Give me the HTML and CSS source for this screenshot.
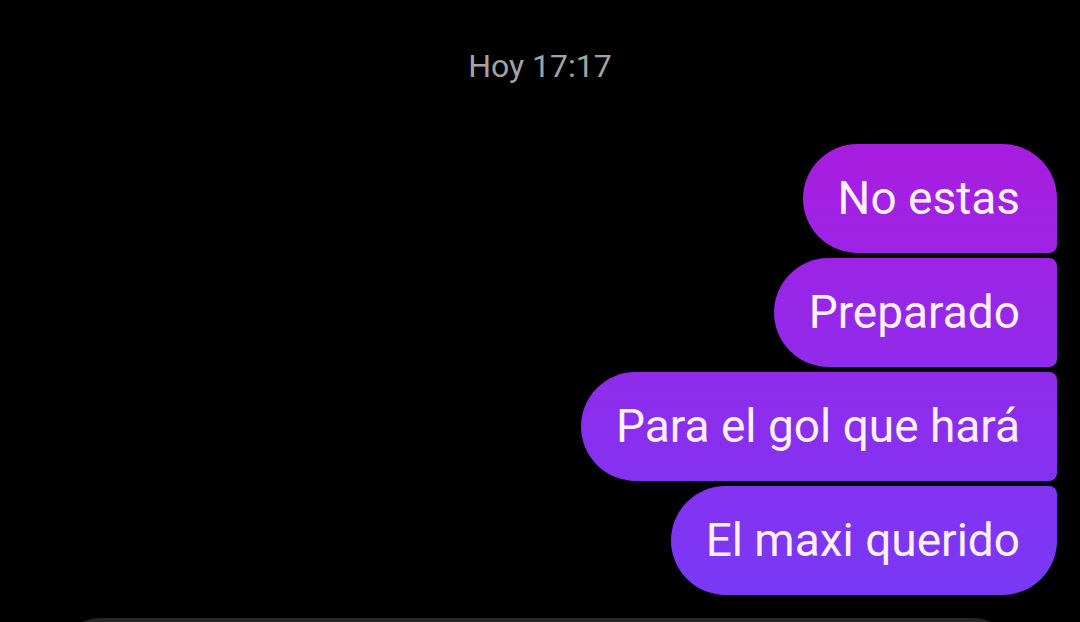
FILE: index.html
```html
<!DOCTYPE html>
<html lang="es">
<head>
  <meta charset="UTF-8" />
  <meta name="viewport" content="width=device-width, initial-scale=1.0" />
  <title>Mensajes</title>
  <link rel="stylesheet" href="styles.css">
</head>
<body>

  <!-- ───── date strip ───── -->
  <div class="stamp">Hoy 17:17</div>

  <!-- ───── sent messages ───── -->
  <div class="thread">
    <div class="bubble first">No estas</div>
    <div class="bubble">Preparado</div>
    <div class="bubble">Para el gol que hará</div>
    <div class="bubble last">El maxi querido</div>
  </div>

  <!-- ───── composer (cut off) ───── -->
  <div class="composer"></div>

</body>
</html>
```

FILE: styles.css
```css
:root {
  --bg:        #000000;
  --c-stamp:   #a3a3a3;
  --c-text:    #fdf1ff;
  --c-top:     #a81ddf;
  --c-bottom:  #7839f6;
  --bg-input:  #262626;

  --r-big:   55px;
  --r-small: 8px;

  --font-base: Roboto, "Noto Sans", Arial, sans-serif;
}

/* ───── base layout ───── */
html, body {
  height: 100%;
  overflow: hidden;
}

body {
  margin: 0;
  background: var(--bg);
  font-family: var(--font-base);
}

/* ───── date strip ───── */
.stamp {
  margin-top: 46px;
  text-align: center;
  color: var(--c-stamp);
  font-size: 32px;
  line-height: 40px;
}

/* ───── bubbles ───── */
.thread {
  display: flex;
  flex-direction: column;
  align-items: flex-end;
  gap: 5px;
  margin-top: 58px;
  padding-right: 23px;
}

.bubble {
  padding: 27px 37px 27px 35px;
  font-size: 46px;
  line-height: 55px;
  color: var(--c-text);
  border-radius: var(--r-big) var(--r-small) var(--r-small) var(--r-big);
  background: linear-gradient(180deg, var(--c-top) 145px, var(--c-bottom) 596px) fixed;
  white-space: nowrap;
}
.bubble.first { border-top-right-radius: var(--r-big); }
.bubble.last  { border-bottom-right-radius: var(--r-big); }

/* ───── composer ───── */
.composer {
  margin: 23px 66px 0 60px;
  height: 80px;
  background: var(--bg-input);
  border-radius: 40px;
}
```
